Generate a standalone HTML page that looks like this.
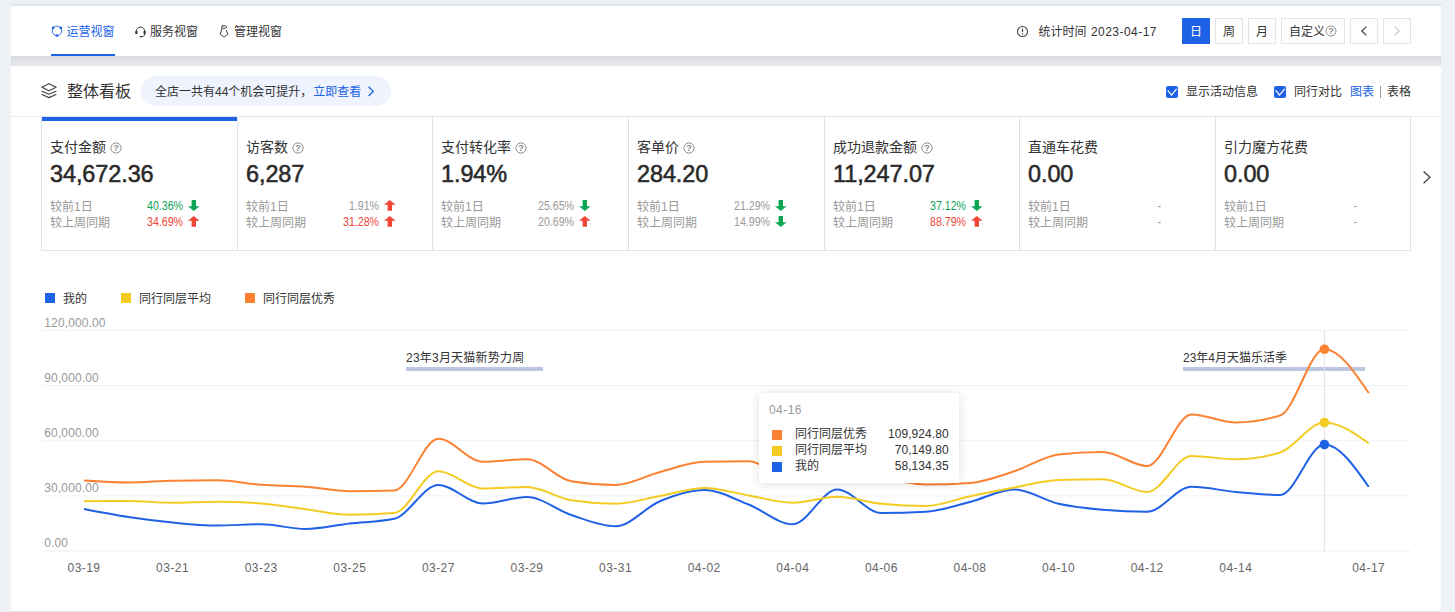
<!DOCTYPE html><html lang="zh-CN"><head><meta charset="utf-8"><title>整体看板</title><style>
*{box-sizing:border-box;margin:0;padding:0}
html,body{width:1455px;height:612px;overflow:hidden}
body{background:#eef1f6;font-family:"Liberation Sans","Noto Sans CJK SC",sans-serif;font-size:12px;color:#333;position:relative}
.wrap{position:absolute;left:11px;top:0;width:1430px;height:612px;overflow:hidden;background:linear-gradient(to bottom,#edf0f5 0,#eaedf2 2px,#e5e8ed 4px,#dee1e6 6px,#d6d8dd 56px,#dcdee3 58px,#e0e2e7 60px,#e3e5ea 63px,#e6e8ed 66px,#dfe1e6 66px,#dfe1e6 612px)}
.top{position:absolute;left:0;top:6px;width:1430px;height:50px;background:#fff}
.main{position:absolute;left:0;top:66px;width:1430px;height:545px;background:#fff}
.t{position:absolute;white-space:nowrap;line-height:16px;height:16px}
.abs{position:absolute}
.tab{font-size:12px}
.btn{position:absolute;top:18px;height:26px;border:1px solid #e3e4e6;background:#fff;text-align:center;line-height:27px;font-size:12px;color:#333;overflow:hidden}
.btn.on{background:#2062e6;border-color:#2062e6;color:#fff}
.cards{position:absolute;left:41px;top:116px;width:1370px;height:135px;border-top:1px solid #e9ebef}
.card{position:absolute;top:116px;height:135px;border-left:1px solid #dce5ee;border-bottom:1px solid #dce5ee;border-top:1px solid #dce5ee}
.ttl{font-size:14px;line-height:20px;height:20px;color:#333}
.num{font-size:24px;line-height:28px;height:28px;color:#2a2a2a;letter-spacing:-.1px;-webkit-text-stroke:.55px #2a2a2a;transform:scaleX(.978);transform-origin:0 50%}
.sub{color:#999}
.pct{text-align:right;transform:scaleX(.885);transform-origin:100% 50%}
.cb{position:absolute;width:12px;height:12px;border-radius:2px;background:#2062e6}
.sw{position:absolute;width:10px;height:10px}
.ax{color:#999}
.tip{position:absolute;left:759px;top:393px;width:200px;height:90px;background:#fff;box-shadow:0 1px 10px rgba(0,0,0,.13)}
</style></head><body>
<div class="wrap"><div class="top"></div><div class="main"></div></div>
<svg class="abs" style="left:50px;top:24px" width="14" height="14" viewBox="0 0 14 14"><circle cx="6.95" cy="6.9" r="4.75" fill="none" stroke="#2062e6" stroke-width=".9"/><circle cx="3.1" cy="3.9" r="1.35" fill="#2062e6"/><circle cx="10.9" cy="3.9" r="1.35" fill="#2062e6"/><circle cx="6.95" cy="11.6" r="1.35" fill="#2062e6"/></svg>
<div class="t tab" style="left:66.5px;top:23.8px;color:#2062e6">运营视窗</div>
<div class="abs" style="left:51px;top:54px;width:64px;height:2px;background:#2062e6"></div>
<svg class="abs" style="left:130px;top:20px" width="22" height="22" viewBox="0 0 22 22" fill="none" stroke="#3a3a3a" stroke-width="1"><path d="M6.3 11.2A4.2 4.2 0 0 1 14.7 11.2"/><rect x="5.2" y="10.8" width="2.3" height="3.4" rx=".9" fill="#3a3a3a" stroke="none"/><rect x="13.5" y="10.8" width="2.3" height="3.4" rx=".9" fill="#3a3a3a" stroke="none"/><path d="M14.7 14C14.7 16 13.2 16.6 11.4 16.6"/><rect x="9.5" y="15.9" width="2.9" height="1.3" rx=".65" fill="#3a3a3a" stroke="none"/></svg>
<div class="t tab" style="left:150px;top:23.8px">服务视窗</div>
<svg class="abs" style="left:213px;top:20px" width="22" height="22" viewBox="0 0 22 22" fill="none" stroke="#444" stroke-width="1" stroke-linejoin="round" stroke-linecap="round"><rect x="8.6" y="5.9" width="4.9" height="2.4" rx="1"/><path d="M8.9 8.5L7.3 14.3 11.1 17 14.8 14.3 13.4 10.3"/></svg>
<div class="t tab" style="left:234px;top:23.8px">管理视窗</div>
<svg class="abs" style="left:1016px;top:25px" width="13" height="13" viewBox="0 0 13 13"><circle cx="6.5" cy="6.5" r="5" fill="none" stroke="#444" stroke-width="1.1"/><path d="M6.5 3.6v3.6" stroke="#444" stroke-width="1.2"/><circle cx="6.5" cy="9" r=".75" fill="#444"/></svg>
<div class="t" style="left:1038.5px;top:24.4px">统计时间</div>
<div class="t" style="left:1091px;top:24px;letter-spacing:.45px">2023-04-17</div>
<div class="btn on" style="left:1182px;width:28px">日</div>
<div class="btn" style="left:1215px;width:28px">周</div>
<div class="btn" style="left:1248px;width:28px">月</div>
<div class="btn" style="left:1281px;width:64px;text-align:left;padding-left:7px">自定义</div>
<svg class="abs" style="left:1325px;top:25px" width="12" height="12" viewBox="0 0 12 12"><circle cx="6" cy="6" r="5" fill="none" stroke="#8c8c8c" stroke-width="1"/><text x="6" y="9.1" font-size="9" font-weight="bold" text-anchor="middle" fill="#8c8c8c" font-family="Liberation Sans, sans-serif">?</text></svg>
<div class="btn" style="left:1350px;width:28px"></div>
<div class="btn" style="left:1383px;width:28px"></div>
<svg class="abs" style="left:1350px;top:18px" width="28" height="26" viewBox="0 0 28 26"><path d="M16.4 8.6l-4.6 4.4 4.6 4.4" fill="none" stroke="#444" stroke-width="1.3"/></svg>
<svg class="abs" style="left:1383px;top:18px" width="28" height="26" viewBox="0 0 28 26"><path d="M11.6 8.6l4.6 4.4-4.6 4.4" fill="none" stroke="#ccc" stroke-width="1.3"/></svg>
<svg class="abs" style="left:40px;top:82px" width="18" height="18" viewBox="0 0 18 18" fill="none" stroke="#444" stroke-width="1.2" stroke-linejoin="round" stroke-linecap="round"><path d="M8.96 1.7L16.1 5.26 8.96 8.8 1.9 5.26z"/><path d="M2 9.2L8.96 12.2 16 9.2"/><path d="M2 12.5L8.96 15.6 16 12.5"/></svg>
<div class="t" style="left:67px;top:81.4px;font-size:16px;line-height:22px;height:22px">整体看板</div>
<div class="abs" style="left:141px;top:76px;width:250px;height:30px;border-radius:15px;background:#eef3fe"></div>
<div class="t" style="left:155px;top:84px">全店一共有44个机会可提升，<span style="color:#2062e6;margin-left:.8px">立即查看</span></div>
<svg class="abs" style="left:366px;top:85px" width="10" height="13" viewBox="0 0 10 13"><path d="M2.6 1.8l4.6 4.6-4.6 4.6" fill="none" stroke="#2062e6" stroke-width="1.3"/></svg>
<div class="cb" style="left:1166px;top:86px"></div>
<svg class="abs" style="left:1166px;top:86px" width="12" height="12" viewBox="0 0 12 12"><path d="M1.7 4.4L5.5 9.1 10.7 2.9" fill="none" stroke="#fff" stroke-width="1.3"/></svg>
<div class="cb" style="left:1274px;top:86px"></div>
<svg class="abs" style="left:1274px;top:86px" width="12" height="12" viewBox="0 0 12 12"><path d="M1.7 4.4L5.5 9.1 10.7 2.9" fill="none" stroke="#fff" stroke-width="1.3"/></svg>
<div class="t" style="left:1186px;top:84px">显示活动信息</div>
<div class="t" style="left:1294px;top:84px">同行对比</div>
<div class="t" style="left:1350px;top:84px;color:#2062e6">图表</div>
<div class="abs" style="left:1380px;top:86px;width:1px;height:12px;background:#999"></div>
<div class="t" style="left:1387px;top:84px">表格</div>
<div class="abs" style="left:11px;top:116px;width:1430px;height:1px;background:#ececec"></div>
<div class="card" style="left:41px;width:196px"></div>
<div class="t ttl" style="left:50.00px;top:137px">支付金额</div>
<svg class="abs" style="left:110.00px;top:141.5px" width="12" height="12" viewBox="0 0 12 12"><circle cx="6" cy="6" r="5.1" fill="none" stroke="#8c8c8c" stroke-width="1"/><text x="6" y="9.1" font-size="9" font-weight="bold" text-anchor="middle" fill="#8c8c8c" font-family="Liberation Sans, sans-serif">?</text></svg>
<div class="t num" style="left:50.00px;top:159.6px">34,672.36</div>
<div class="t sub" style="left:50.00px;top:199.1px">较前1日</div>
<div class="t pct" style="left:122.50px;width:60px;top:198.0px;color:#0aa653">40.36%</div>
<svg class="abs" style="left:188.30px;top:200px" width="12" height="11" viewBox="0 0 12 11"><path d="M3.6 0h4.4v6.2h3.6L5.8 10.9 0 6.2h3.6z" fill="#0aa653"/></svg>
<div class="t sub" style="left:50.00px;top:214.9px">较上周同期</div>
<div class="t pct" style="left:122.50px;width:60px;top:213.8px;color:#f04638">34.69%</div>
<svg class="abs" style="left:188.30px;top:216px" width="12" height="11" viewBox="0 0 12 11"><path d="M5.8 0l5.8 4.8H8v5.9H3.6V4.8H0z" fill="#f04638"/></svg>
<div class="card" style="left:237px;width:195px"></div>
<div class="t ttl" style="left:246.00px;top:137px">访客数</div>
<svg class="abs" style="left:292.00px;top:141.5px" width="12" height="12" viewBox="0 0 12 12"><circle cx="6" cy="6" r="5.1" fill="none" stroke="#8c8c8c" stroke-width="1"/><text x="6" y="9.1" font-size="9" font-weight="bold" text-anchor="middle" fill="#8c8c8c" font-family="Liberation Sans, sans-serif">?</text></svg>
<div class="t num" style="left:246.00px;top:159.6px">6,287</div>
<div class="t sub" style="left:246.00px;top:199.1px">较前1日</div>
<div class="t pct" style="left:318.50px;width:60px;top:198.0px;color:#999">1.91%</div>
<svg class="abs" style="left:384.30px;top:200px" width="12" height="11" viewBox="0 0 12 11"><path d="M5.8 0l5.8 4.8H8v5.9H3.6V4.8H0z" fill="#f04638"/></svg>
<div class="t sub" style="left:246.00px;top:214.9px">较上周同期</div>
<div class="t pct" style="left:318.50px;width:60px;top:213.8px;color:#f04638">31.28%</div>
<svg class="abs" style="left:384.30px;top:216px" width="12" height="11" viewBox="0 0 12 11"><path d="M5.8 0l5.8 4.8H8v5.9H3.6V4.8H0z" fill="#f04638"/></svg>
<div class="card" style="left:432px;width:196px"></div>
<div class="t ttl" style="left:441.00px;top:137px">支付转化率</div>
<svg class="abs" style="left:515.00px;top:141.5px" width="12" height="12" viewBox="0 0 12 12"><circle cx="6" cy="6" r="5.1" fill="none" stroke="#8c8c8c" stroke-width="1"/><text x="6" y="9.1" font-size="9" font-weight="bold" text-anchor="middle" fill="#8c8c8c" font-family="Liberation Sans, sans-serif">?</text></svg>
<div class="t num" style="left:441.00px;top:159.6px">1.94%</div>
<div class="t sub" style="left:441.00px;top:199.1px">较前1日</div>
<div class="t pct" style="left:513.50px;width:60px;top:198.0px;color:#999">25.65%</div>
<svg class="abs" style="left:579.30px;top:200px" width="12" height="11" viewBox="0 0 12 11"><path d="M3.6 0h4.4v6.2h3.6L5.8 10.9 0 6.2h3.6z" fill="#0aa653"/></svg>
<div class="t sub" style="left:441.00px;top:214.9px">较上周同期</div>
<div class="t pct" style="left:513.50px;width:60px;top:213.8px;color:#999">20.69%</div>
<svg class="abs" style="left:579.30px;top:216px" width="12" height="11" viewBox="0 0 12 11"><path d="M5.8 0l5.8 4.8H8v5.9H3.6V4.8H0z" fill="#f04638"/></svg>
<div class="card" style="left:628px;width:196px"></div>
<div class="t ttl" style="left:637.00px;top:137px">客单价</div>
<svg class="abs" style="left:683.00px;top:141.5px" width="12" height="12" viewBox="0 0 12 12"><circle cx="6" cy="6" r="5.1" fill="none" stroke="#8c8c8c" stroke-width="1"/><text x="6" y="9.1" font-size="9" font-weight="bold" text-anchor="middle" fill="#8c8c8c" font-family="Liberation Sans, sans-serif">?</text></svg>
<div class="t num" style="left:637.00px;top:159.6px">284.20</div>
<div class="t sub" style="left:637.00px;top:199.1px">较前1日</div>
<div class="t pct" style="left:709.50px;width:60px;top:198.0px;color:#999">21.29%</div>
<svg class="abs" style="left:775.30px;top:200px" width="12" height="11" viewBox="0 0 12 11"><path d="M3.6 0h4.4v6.2h3.6L5.8 10.9 0 6.2h3.6z" fill="#0aa653"/></svg>
<div class="t sub" style="left:637.00px;top:214.9px">较上周同期</div>
<div class="t pct" style="left:709.50px;width:60px;top:213.8px;color:#999">14.99%</div>
<svg class="abs" style="left:775.30px;top:216px" width="12" height="11" viewBox="0 0 12 11"><path d="M3.6 0h4.4v6.2h3.6L5.8 10.9 0 6.2h3.6z" fill="#0aa653"/></svg>
<div class="card" style="left:824px;width:195px"></div>
<div class="t ttl" style="left:833.00px;top:137px">成功退款金额</div>
<svg class="abs" style="left:921.00px;top:141.5px" width="12" height="12" viewBox="0 0 12 12"><circle cx="6" cy="6" r="5.1" fill="none" stroke="#8c8c8c" stroke-width="1"/><text x="6" y="9.1" font-size="9" font-weight="bold" text-anchor="middle" fill="#8c8c8c" font-family="Liberation Sans, sans-serif">?</text></svg>
<div class="t num" style="left:833.00px;top:159.6px">11,247.07</div>
<div class="t sub" style="left:833.00px;top:199.1px">较前1日</div>
<div class="t pct" style="left:905.50px;width:60px;top:198.0px;color:#0aa653">37.12%</div>
<svg class="abs" style="left:971.30px;top:200px" width="12" height="11" viewBox="0 0 12 11"><path d="M3.6 0h4.4v6.2h3.6L5.8 10.9 0 6.2h3.6z" fill="#0aa653"/></svg>
<div class="t sub" style="left:833.00px;top:214.9px">较上周同期</div>
<div class="t pct" style="left:905.50px;width:60px;top:213.8px;color:#f04638">88.79%</div>
<svg class="abs" style="left:971.30px;top:216px" width="12" height="11" viewBox="0 0 12 11"><path d="M5.8 0l5.8 4.8H8v5.9H3.6V4.8H0z" fill="#f04638"/></svg>
<div class="card" style="left:1019px;width:196px"></div>
<div class="t ttl" style="left:1028.00px;top:137px">直通车花费</div>
<div class="t num" style="left:1028.00px;top:159.6px">0.00</div>
<div class="t sub" style="left:1028.00px;top:199.1px">较前1日</div>
<div class="t pct" style="left:1100.50px;width:60px;top:198.0px;color:#999">-</div>
<div class="t sub" style="left:1028.00px;top:214.9px">较上周同期</div>
<div class="t pct" style="left:1100.50px;width:60px;top:213.8px;color:#999">-</div>
<div class="card" style="left:1215px;width:195px"></div>
<div class="t ttl" style="left:1224.00px;top:137px">引力魔方花费</div>
<div class="t num" style="left:1224.00px;top:159.6px">0.00</div>
<div class="t sub" style="left:1224.00px;top:199.1px">较前1日</div>
<div class="t pct" style="left:1296.50px;width:60px;top:198.0px;color:#999">-</div>
<div class="t sub" style="left:1224.00px;top:214.9px">较上周同期</div>
<div class="t pct" style="left:1296.50px;width:60px;top:213.8px;color:#999">-</div>
<div class="abs" style="left:1410px;top:116px;width:1px;height:135px;background:#dce5ee"></div>
<div class="abs" style="left:42px;top:117px;width:194.71px;height:4px;background:#2062e6"></div>
<svg class="abs" style="left:1420px;top:169px" width="14" height="16" viewBox="0 0 14 16"><path d="M3.6 2.4l6.4 5.9-6.4 5.9" fill="none" stroke="#444" stroke-width="1.3"/></svg>
<div class="sw" style="left:45px;top:293px;background:#2062e6"></div>
<div class="t" style="left:63px;top:291.2px">我的</div>
<div class="sw" style="left:121px;top:293px;background:#f3cb23"></div>
<div class="t" style="left:139px;top:291.2px">同行同层平均</div>
<div class="sw" style="left:245px;top:293px;background:#fc8233"></div>
<div class="t" style="left:263px;top:291.2px">同行同层优秀</div>
<svg class="abs" style="left:0;top:0" width="1455" height="612" viewBox="0 0 1455 612" font-family="Liberation Sans, Noto Sans CJK SC, sans-serif" font-size="12"><rect x="42" y="330.10" width="1368.5" height="1" fill="#eef0f8"/><rect x="42" y="385.20" width="1368.5" height="1" fill="#eef0f8"/><rect x="42" y="440.30" width="1368.5" height="1" fill="#eef0f8"/><rect x="42" y="495.40" width="1368.5" height="1" fill="#eef0f8"/><rect x="42" y="550.50" width="1368.5" height="1" fill="#eef0f8"/><text x="44.3" y="326.70" fill="#999" letter-spacing=".12">120,000.00</text><text x="44.3" y="381.80" fill="#999" letter-spacing=".12">90,000.00</text><text x="44.3" y="436.90" fill="#999" letter-spacing=".12">60,000.00</text><text x="44.3" y="492.00" fill="#999" letter-spacing=".12">30,000.00</text><text x="44.3" y="547.10" fill="#999" letter-spacing=".12">0.00</text><text x="84.00" y="572" fill="#666" text-anchor="middle" letter-spacing=".45">03-19</text><text x="172.60" y="572" fill="#666" text-anchor="middle" letter-spacing=".45">03-21</text><text x="261.20" y="572" fill="#666" text-anchor="middle" letter-spacing=".45">03-23</text><text x="349.80" y="572" fill="#666" text-anchor="middle" letter-spacing=".45">03-25</text><text x="438.40" y="572" fill="#666" text-anchor="middle" letter-spacing=".45">03-27</text><text x="527.00" y="572" fill="#666" text-anchor="middle" letter-spacing=".45">03-29</text><text x="615.60" y="572" fill="#666" text-anchor="middle" letter-spacing=".45">03-31</text><text x="704.20" y="572" fill="#666" text-anchor="middle" letter-spacing=".45">04-02</text><text x="792.80" y="572" fill="#666" text-anchor="middle" letter-spacing=".45">04-04</text><text x="881.40" y="572" fill="#666" text-anchor="middle" letter-spacing=".45">04-06</text><text x="970.00" y="572" fill="#666" text-anchor="middle" letter-spacing=".45">04-08</text><text x="1058.60" y="572" fill="#666" text-anchor="middle" letter-spacing=".45">04-10</text><text x="1147.20" y="572" fill="#666" text-anchor="middle" letter-spacing=".45">04-12</text><text x="1235.80" y="572" fill="#666" text-anchor="middle" letter-spacing=".45">04-14</text><text x="1368.70" y="572" fill="#666" text-anchor="middle" letter-spacing=".45">04-17</text><text x="406" y="361.9" fill="#333" letter-spacing=".22">23年3月天猫新势力周</text><rect x="406" y="367" width="137" height="4" fill="#bcc7e3"/><text x="1183" y="361.9" fill="#333">23年4月天猫乐活季</text><rect x="1183" y="367" width="182" height="4" fill="#bcc7e3"/><rect x="1323.90" y="330.5" width="1" height="220.5" fill="#e2e2e2"/><path d="M84.00,509.00C98.77,511.88 113.53,514.75 128.30,517.00C143.07,519.25 157.83,521.08 172.60,522.50C187.37,523.92 202.13,525.50 216.90,525.50C231.67,525.50 246.43,524.25 261.20,524.25C275.97,524.25 290.73,529.00 305.50,529.00C320.27,529.00 335.03,525.21 349.80,523.50C364.57,521.79 379.33,521.92 394.10,518.75C408.87,515.58 423.63,485.00 438.40,485.00C453.17,485.00 467.93,503.50 482.70,503.50C497.47,503.50 512.23,497.00 527.00,497.00C541.77,497.00 556.53,510.12 571.30,515.00C586.07,519.88 600.83,526.25 615.60,526.25C630.37,526.25 645.13,507.29 659.90,501.25C674.67,495.21 689.43,490.00 704.20,490.00C718.97,490.00 733.73,498.79 748.50,504.50C763.27,510.21 778.03,524.25 792.80,524.25C807.57,524.25 822.33,489.50 837.10,489.50C851.87,489.50 866.63,513.00 881.40,513.00C896.17,513.00 910.93,512.58 925.70,511.75C940.47,510.92 955.23,505.71 970.00,502.00C984.77,498.29 999.53,489.50 1014.30,489.50C1029.07,489.50 1043.83,500.38 1058.60,503.75C1073.37,507.12 1088.13,508.42 1102.90,509.75C1117.67,511.08 1132.43,511.75 1147.20,511.75C1161.97,511.75 1176.73,486.75 1191.50,486.75C1206.27,486.75 1221.03,490.62 1235.80,492.00C1250.57,493.38 1265.33,495.00 1280.10,495.00C1294.87,495.00 1309.63,444.50 1324.40,444.50C1339.17,444.50 1353.93,465.62 1368.70,486.75" fill="none" stroke="#2062e6" stroke-width="2" stroke-linecap="butt" stroke-linejoin="round"/><path d="M84.00,501.25C98.77,501.12 113.53,501.00 128.30,501.00C143.07,501.00 157.83,502.75 172.60,502.75C187.37,502.75 202.13,501.75 216.90,501.75C231.67,501.75 246.43,502.33 261.20,503.50C275.97,504.67 290.73,507.38 305.50,509.25C320.27,511.12 335.03,514.75 349.80,514.75C364.57,514.75 379.33,514.17 394.10,513.00C408.87,511.83 423.63,471.25 438.40,471.25C453.17,471.25 467.93,488.50 482.70,488.50C497.47,488.50 512.23,487.00 527.00,487.00C541.77,487.00 556.53,497.92 571.30,500.25C586.07,502.58 600.83,503.75 615.60,503.75C630.37,503.75 645.13,498.62 659.90,496.00C674.67,493.38 689.43,488.00 704.20,488.00C718.97,488.00 733.73,492.94 748.50,495.40C763.27,497.86 778.03,502.75 792.80,502.75C807.57,502.75 822.33,496.75 837.10,496.75C851.87,496.75 866.63,502.25 881.40,503.75C896.17,505.25 910.93,506.00 925.70,506.00C940.47,506.00 955.23,499.33 970.00,496.25C984.77,493.17 999.53,490.21 1014.30,487.50C1029.07,484.79 1043.83,480.50 1058.60,480.00C1073.37,479.50 1088.13,479.25 1102.90,479.25C1117.67,479.25 1132.43,492.00 1147.20,492.00C1161.97,492.00 1176.73,456.00 1191.50,456.00C1206.27,456.00 1221.03,459.25 1235.80,459.25C1250.57,459.25 1265.33,457.00 1280.10,452.50C1294.87,448.00 1309.63,422.50 1324.40,422.50C1339.17,422.50 1353.93,432.88 1368.70,443.25" fill="none" stroke="#f3cb23" stroke-width="2" stroke-linecap="butt" stroke-linejoin="round"/><path d="M84.00,480.50C98.77,481.50 113.53,482.50 128.30,482.50C143.07,482.50 157.83,481.08 172.60,480.75C187.37,480.42 202.13,480.25 216.90,480.25C231.67,480.25 246.43,483.67 261.20,484.75C275.97,485.83 290.73,485.67 305.50,486.75C320.27,487.83 335.03,491.25 349.80,491.25C364.57,491.25 379.33,491.00 394.10,490.50C408.87,490.00 423.63,438.75 438.40,438.75C453.17,438.75 467.93,461.75 482.70,461.75C497.47,461.75 512.23,459.25 527.00,459.25C541.77,459.25 556.53,478.75 571.30,481.25C586.07,483.75 600.83,485.00 615.60,485.00C630.37,485.00 645.13,475.88 659.90,472.00C674.67,468.12 689.43,462.08 704.20,461.75C718.97,461.42 733.73,461.25 748.50,461.25C763.27,461.25 778.03,479.50 792.80,479.50C807.57,479.50 822.33,479.50 837.10,479.50C851.87,479.50 866.63,479.50 881.40,479.50C896.17,479.50 910.93,484.50 925.70,484.50C940.47,484.50 955.23,484.00 970.00,483.00C984.77,482.00 999.53,476.00 1014.30,471.25C1029.07,466.50 1043.83,456.17 1058.60,454.50C1073.37,452.83 1088.13,452.00 1102.90,452.00C1117.67,452.00 1132.43,466.00 1147.20,466.00C1161.97,466.00 1176.73,414.50 1191.50,414.50C1206.27,414.50 1221.03,422.50 1235.80,422.50C1250.57,422.50 1265.33,420.17 1280.10,415.50C1294.87,410.83 1309.63,349.25 1324.40,349.25C1339.17,349.25 1353.93,371.12 1368.70,393.00" fill="none" stroke="#fc8233" stroke-width="2" stroke-linecap="butt" stroke-linejoin="round"/><circle cx="1324.40" cy="444.5" r="4.8" fill="#2062e6"/><circle cx="1324.40" cy="422.5" r="4.8" fill="#f3cb23"/><circle cx="1324.40" cy="349.25" r="4.8" fill="#fc8233"/></svg>
<div class="tip"></div>
<div class="t" style="left:769px;top:401.5px;color:#999;letter-spacing:.45px">04-16</div>
<div class="sw" style="left:772.2px;top:430px;background:#fc8233"></div>
<div class="t" style="left:795px;top:426.4px">同行同层优秀</div>
<div class="t" style="left:868.8px;width:80px;text-align:right;letter-spacing:.08px;top:426.4px">109,924.80</div>
<div class="sw" style="left:772.2px;top:446px;background:#f3cb23"></div>
<div class="t" style="left:795px;top:442.4px">同行同层平均</div>
<div class="t" style="left:868.8px;width:80px;text-align:right;letter-spacing:.08px;top:442.4px">70,149.80</div>
<div class="sw" style="left:772.2px;top:462px;background:#2062e6"></div>
<div class="t" style="left:795px;top:458.4px">我的</div>
<div class="t" style="left:868.8px;width:80px;text-align:right;letter-spacing:.08px;top:458.4px">58,134.35</div>
</body></html>
